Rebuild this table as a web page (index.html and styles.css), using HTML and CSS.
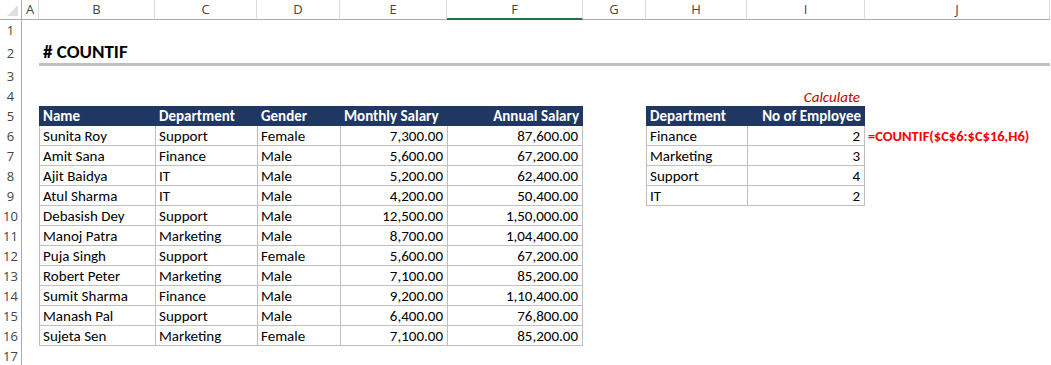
FILE: index.html
```html
<!DOCTYPE html>
<html>
<head>
<meta charset="utf-8">
<title>COUNTIF</title>
<link rel="stylesheet" href="styles.css">
</head>
<body>
<div class="sheet">
  <div class="row colhdr">
    <div class="corner"><span class="tri"></span></div>
    <div class="ch">A</div><div class="ch">B</div><div class="ch">C</div><div class="ch">D</div><div class="ch">E</div><div class="ch sel">F</div><div class="ch">G</div><div class="ch">H</div><div class="ch">I</div><div class="ch">J</div>
  </div>
  <div class="row"><div class="rh">1</div></div>
  <div class="row r2"><div class="rh">2</div><div></div><div class="title">#&nbsp;COUNTIF</div></div>
  <div class="row"><div class="rh">3</div></div>
  <div class="row"><div class="rh">4</div><div></div><div></div><div></div><div></div><div></div><div></div><div></div><div></div><div class="calc">Calculate</div></div>
  <div class="row">
    <div class="rh">5</div><div></div>
    <div class="c hd">Name</div><div class="c hd">Department</div><div class="c hd">Gender</div><div class="c hd">Monthly Salary</div><div class="c hd num last">Annual Salary</div>
    <div></div>
    <div class="c hd">Department</div><div class="c hd num last">No of Employee</div>
  </div>
  <div class="row">
    <div class="rh">6</div><div></div>
    <div class="c">Sunita Roy</div><div class="c">Support</div><div class="c">Female</div><div class="c num">7,300.00</div><div class="c num last">87,600.00</div>
    <div></div>
    <div class="c">Finance</div><div class="c num last">2</div><div class="formula">=COUNTIF($C$6:$C$16,H6)</div>
  </div>
  <div class="row">
    <div class="rh">7</div><div></div>
    <div class="c">Amit Sana</div><div class="c">Finance</div><div class="c">Male</div><div class="c num">5,600.00</div><div class="c num last">67,200.00</div>
    <div></div>
    <div class="c">Marketing</div><div class="c num last">3</div>
  </div>
  <div class="row">
    <div class="rh">8</div><div></div>
    <div class="c">Ajit Baidya</div><div class="c">IT</div><div class="c">Male</div><div class="c num">5,200.00</div><div class="c num last">62,400.00</div>
    <div></div>
    <div class="c">Support</div><div class="c num last">4</div>
  </div>
  <div class="row">
    <div class="rh">9</div><div></div>
    <div class="c">Atul Sharma</div><div class="c">IT</div><div class="c">Male</div><div class="c num">4,200.00</div><div class="c num last">50,400.00</div>
    <div></div>
    <div class="c end">IT</div><div class="c num last end">2</div>
  </div>
  <div class="row">
    <div class="rh">10</div><div></div>
    <div class="c">Debasish Dey</div><div class="c">Support</div><div class="c">Male</div><div class="c num">12,500.00</div><div class="c num last">1,50,000.00</div>
  </div>
  <div class="row">
    <div class="rh">11</div><div></div>
    <div class="c">Manoj Patra</div><div class="c">Marketing</div><div class="c">Male</div><div class="c num">8,700.00</div><div class="c num last">1,04,400.00</div>
  </div>
  <div class="row">
    <div class="rh">12</div><div></div>
    <div class="c">Puja Singh</div><div class="c">Support</div><div class="c">Female</div><div class="c num">5,600.00</div><div class="c num last">67,200.00</div>
  </div>
  <div class="row">
    <div class="rh">13</div><div></div>
    <div class="c">Robert Peter</div><div class="c">Marketing</div><div class="c">Male</div><div class="c num">7,100.00</div><div class="c num last">85,200.00</div>
  </div>
  <div class="row">
    <div class="rh">14</div><div></div>
    <div class="c">Sumit Sharma</div><div class="c">Finance</div><div class="c">Male</div><div class="c num">9,200.00</div><div class="c num last">1,10,400.00</div>
  </div>
  <div class="row">
    <div class="rh">15</div><div></div>
    <div class="c">Manash Pal</div><div class="c">Support</div><div class="c">Male</div><div class="c num">6,400.00</div><div class="c num last">76,800.00</div>
  </div>
  <div class="row">
    <div class="rh">16</div><div></div>
    <div class="c end">Sujeta Sen</div><div class="c end">Marketing</div><div class="c end">Female</div><div class="c num end">7,100.00</div><div class="c num last end">85,200.00</div>
  </div>
  <div class="row"><div class="rh">17</div></div>
</div>
</body>
</html>
```

FILE: styles.css
```css
html, body {
  margin: 0;
  padding: 0;
  background: #ffffff;
}

.sheet {
  width: 1051px;
  font-family: Carlito, Lato, "Liberation Sans", sans-serif;
  font-size: 15px;
  color: #000;
}

.row {
  display: grid;
  grid-template-columns: 22px 17px 116px 102px 83px 107px 136px 63px 101px 118px 185px;
  grid-template-rows: 20px;
  height: 20px;
}

.row > div {
  box-sizing: border-box;
  min-width: 0;
  white-space: nowrap;
}

.row.r2 {
  grid-template-rows: 26px;
  height: 26px;
}

/* column header row */
.corner {
  position: relative;
  border-right: 1px solid #ababab;
  border-bottom: 1px solid #ababab;
}

.tri {
  position: absolute;
  right: 3px;
  bottom: 3px;
  width: 0;
  height: 0;
  border-left: 11px solid transparent;
  border-bottom: 11px solid #dfdfdf;
}

.ch {
  border-bottom: 1px solid #ababab;
  border-right: 1px solid #dadada;
  font-family: "Open Sans", "Noto Sans", sans-serif;
  font-size: 13px;
  color: #444;
  text-align: center;
  line-height: 19px;
}

.ch.sel {
  border-bottom: 2px solid #217346;
}

/* row headers */
.rh {
  border-right: 1px solid #ababab;
  font-family: "Open Sans", "Noto Sans", sans-serif;
  font-size: 13px;
  color: #444;
  text-align: center;
  line-height: 21px;
}

.r2 .rh {
  line-height: 27px;
}

/* title */
.title {
  grid-column: 3 / 12;
  grid-row: 1;
  border-bottom: 3px solid #c0c0c0;
  font-weight: bold;
  font-size: 19px;
  line-height: 22px;
  padding-left: 4px;
  padding-top: 1px;
}

/* table cells */
.c {
  border-left: 1px solid #bfbfbf;
  border-bottom: 1px solid #bfbfbf;
  padding: 1px 4px 0 3px;
  line-height: 19px;
  overflow: hidden;
}

.c.last {
  border-right: 1px solid #bfbfbf;
}

.c.num {
  text-align: right;
}

.c.hd {
  background: #203764;
  color: #ffffff;
  font-weight: bold;
  border-left: none;
  border-right: none;
  border-bottom: 1px solid #203764;
  padding-left: 4px;
}

.calc {
  color: #c00000;
  font-style: italic;
  text-align: right;
  padding-right: 5px;
  padding-top: 1px;
  line-height: 20px;
}

.formula {
  color: #ff0000;
  font-weight: bold;
  font-size: 14.5px;
  padding-left: 3px;
  padding-top: 1px;
  line-height: 19px;
}
```
